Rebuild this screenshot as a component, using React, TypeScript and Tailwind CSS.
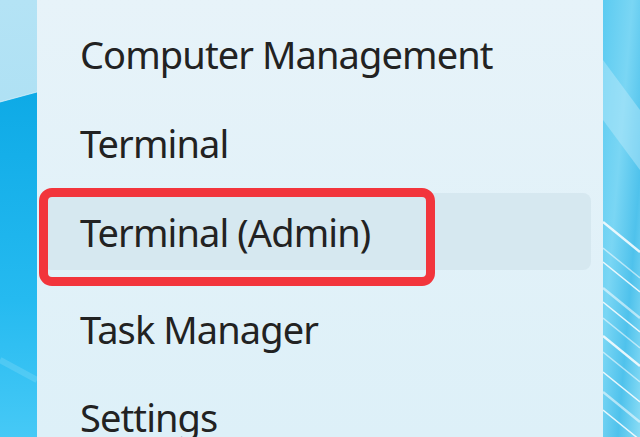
import React from "react";

const items = [
  { label: "Computer Management" },
  { label: "Terminal" },
  { label: "Terminal (Admin)", active: true },
];

const lower = [{ label: "Task Manager" }, { label: "Settings" }];

function LeftWallpaper() {
  return (
    <svg className="block h-full w-full" viewBox="0 0 37 437" preserveAspectRatio="none">
      <defs>
        <linearGradient id="lwTop" x1="0" y1="0" x2="0" y2="1">
          <stop offset="0" stopColor="#b4e3f5" />
          <stop offset="1" stopColor="#9fdaf1" />
        </linearGradient>
        <linearGradient id="lwBottom" x1="0" y1="0" x2="0" y2="1">
          <stop offset="0" stopColor="#0eaae6" />
          <stop offset="0.6" stopColor="#25baf0" />
          <stop offset="1" stopColor="#46c9f6" />
        </linearGradient>
      </defs>
      <rect width="37" height="437" fill="url(#lwTop)" />
      <polygon points="0,102 37,92 37,437 0,437" fill="url(#lwBottom)" />
      <line x1="0" y1="102" x2="37" y2="92" stroke="#e8f6fc" strokeWidth="1" opacity="0.7" />
      <line x1="0" y1="360" x2="37" y2="380" stroke="#7fdaf8" strokeWidth="6" opacity="0.35" />
    </svg>
  );
}

function RightWallpaper() {
  const streaks = [222, 248, 262, 288, 302, 318, 336, 352, 372, 392, 410];
  return (
    <svg className="block h-full w-full" viewBox="0 0 37 437" preserveAspectRatio="none">
      <defs>
        <linearGradient id="rw" x1="0" y1="0" x2="1" y2="1">
          <stop offset="0" stopColor="#5ccbf1" />
          <stop offset="0.4" stopColor="#7ad6f4" />
          <stop offset="0.7" stopColor="#4fc2ec" />
          <stop offset="1" stopColor="#8adcf5" />
        </linearGradient>
      </defs>
      <rect width="37" height="437" fill="url(#rw)" />
      <polygon points="0,60 37,110 37,170 0,120" fill="#bfeafa" opacity="0.45" />
      {streaks.map((y, i) => (
        <line
          key={y}
          x1="0"
          y1={y}
          x2="37"
          y2={y + 30}
          stroke="#ffffff"
          strokeWidth={i % 3 === 0 ? 2.5 : 1.5}
          opacity={i % 2 === 0 ? 0.85 : 0.55}
        />
      ))}
    </svg>
  );
}

function Row({ label, active }: { label: string; active?: boolean }) {
  return (
    <div
      className={
        "relative ml-[6px] mr-[12px] flex h-[77px] items-center rounded-[8px] pl-[37px] " +
        (active ? "bg-[#d6e8f0]" : "")
      }
    >
      <span className="text-[38px] leading-none tracking-[-0.9px] text-[#222222]">{label}</span>
      {active && (
        <div className="pointer-events-none absolute left-[-4px] top-[-5px] h-[98px] w-[396px] rounded-[13px] border-[9px] border-[#f2353c]" />
      )}
    </div>
  );
}

export default function App() {
  return (
    <div
      className="flex h-[437px] w-[640px] overflow-hidden"
      style={{ fontFamily: '"Noto Sans", "Open Sans", sans-serif' }}
    >
      <div className="w-[37px] shrink-0">
        <LeftWallpaper />
      </div>
      <div className="flex flex-1 flex-col bg-gradient-to-b from-[#e7f3f9] to-[#ddf0f8] pt-[15px]">
        <div className="flex flex-col gap-[12px]">
          {items.map((item) => (
            <Row key={item.label} label={item.label} active={item.active} />
          ))}
        </div>
        <div className="mb-[11px] mt-[9px] h-px bg-[#cadde6]" />
        <div className="flex flex-col gap-[11px]">
          {lower.map((item) => (
            <Row key={item.label} label={item.label} />
          ))}
        </div>
      </div>
      <div className="w-[37px] shrink-0">
        <RightWallpaper />
      </div>
    </div>
  );
}
